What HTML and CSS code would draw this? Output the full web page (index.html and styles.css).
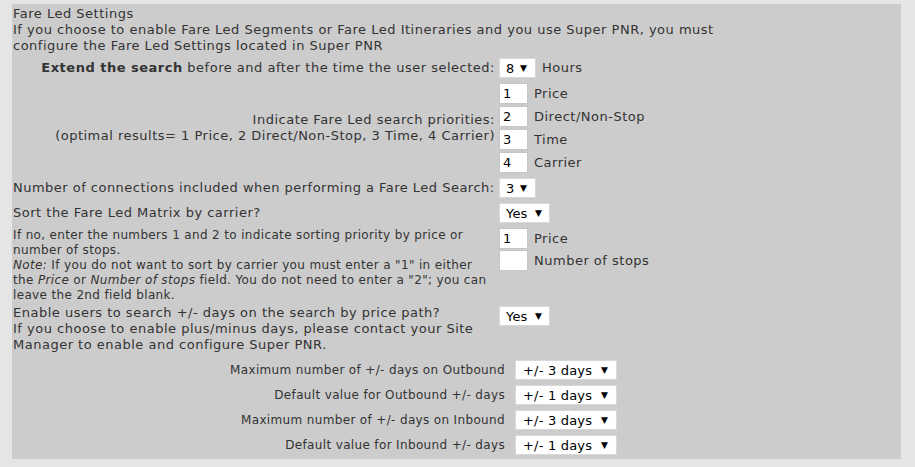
FILE: index.html
```html
<!DOCTYPE html>
<html>
<head>
<meta charset="utf-8">
<title>Fare Led Settings</title>
<link rel="stylesheet" href="styles.css">
</head>
<body>
<div class="panel">
  <div class="intro">Fare Led Settings<br>If you choose to enable Fare Led Segments or Fare Led Itineraries and you use Super PNR, you must<br>configure the Fare Led Settings located in Super PNR</div>

  <div class="grid">
    <div class="lbl right row-extend"><span><b>Extend the search</b> before and after the time the user selected:</span></div>
    <div class="ctl row-extend"><span class="sel w37"><select><option>8</option></select></span><span class="unit">Hours</span></div>

    <div class="lbl right row-prio"><span>Indicate Fare Led search priorities:<br>(optimal results= 1 Price, 2 Direct/Non-Stop, 3 Time, 4 Carrier)</span></div>
    <div class="stack row-prio">
      <div class="pair"><input class="num" value="1"><span>Price</span></div>
      <div class="pair"><input class="num" value="2"><span>Direct/Non-Stop</span></div>
      <div class="pair"><input class="num" value="3"><span>Time</span></div>
      <div class="pair"><input class="num" value="4"><span>Carrier</span></div>
    </div>

    <div class="lbl nowrap row-conn"><span>Number of connections included when performing a Fare Led Search:</span></div>
    <div class="ctl row-conn"><span class="sel w37"><select><option>3</option></select></span></div>

    <div class="lbl row-sort"><span>Sort the Fare Led Matrix by carrier?</span></div>
    <div class="ctl row-sort"><span class="sel w51"><select><option>Yes</option></select></span></div>

    <div class="note row-order">If no, enter the numbers 1 and 2 to indicate sorting priority by price or number of stops.<br><i>Note:</i> If you do not want to sort by carrier you must enter a "1" in either the <i>Price</i> or <i>Number of stops</i> field. You do not need to enter a "2"; you can leave the 2nd field blank.</div>
    <div class="stack tight row-order">
      <div class="pair"><input class="num" value="1"><span>Price</span></div>
      <div class="pair"><input class="num" value=""><span>Number of stops</span></div>
    </div>

    <div class="text row-days">Enable users to search +/- days on the search by price path?<br>If you choose to enable plus/minus days, please contact your Site Manager to enable and configure Super PNR.</div>
    <div class="ctl top row-days"><span class="sel w51"><select><option>Yes</option></select></span></div>
  </div>

  <div class="days">
    <div class="dlbl">Maximum number of +/- days on Outbound</div>
    <div><span class="sel w102"><select><option>+/- 3 days</option></select></span></div>
    <div class="dlbl">Default value for Outbound +/- days</div>
    <div><span class="sel w102"><select><option>+/- 1 days</option></select></span></div>
    <div class="dlbl">Maximum number of +/- days on Inbound</div>
    <div><span class="sel w102"><select><option>+/- 3 days</option></select></span></div>
    <div class="dlbl">Default value for Inbound +/- days</div>
    <div><span class="sel w102"><select><option>+/- 1 days</option></select></span></div>
  </div>
</div>
</body>
</html>
```
FILE: styles.css
```css
html, body {
  background: #e5e5e5;
}
body {
  margin: 4px 14px 8px 12px;
  font-family: "DejaVu Sans", Verdana, sans-serif;
  font-size: 13px;
  line-height: 16px;
  letter-spacing: 0.5px;
  color: #333;
}
.panel {
  background: #cccccc;
  padding: 2px 0 4px 1px;
}
.intro {
  line-height: 16px;
}
.grid {
  display: grid;
  grid-template-columns: 482px 1fr;
  column-gap: 4px;
  margin-top: 4px;
}
.lbl {
  display: flex;
  align-items: center;
}
.lbl.right {
  justify-content: flex-end;
  text-align: right;
}
.lbl.nowrap {
  white-space: nowrap;
  letter-spacing: 0.48px;
}
.note {
  font-size: 12px;
  line-height: 15px;
  letter-spacing: 0.35px;
}
.ctl {
  display: flex;
  align-items: center;
  letter-spacing: 0;
}
.ctl.top {
  align-items: flex-start;
  padding-top: 1px;
}
.row-extend { height: 20px; }
.row-prio { margin-top: 5px; }
.row-conn { margin-top: 5px; height: 20px; }
.row-sort { margin-top: 5px; height: 20px; }
.row-order { margin-top: 5px; }
.row-days { margin-top: 2px; }
.unit {
  margin-left: 6px;
  letter-spacing: 0.5px;
}
.stack {
  display: flex;
  flex-direction: column;
  gap: 2px;
}
.stack.tight {
  gap: 1px;
}
.pair {
  display: flex;
  align-items: center;
  gap: 6px;
}
.num {
  width: 29px;
  height: 21px;
  box-sizing: border-box;
  margin: 0;
  border: 1px solid #c6c6c6;
  background: #fff;
  padding: 0 0 0 3px;
  font-family: "DejaVu Sans", Verdana, sans-serif;
  font-size: 13px;
  color: #000;
  outline: none;
}
.sel {
  position: relative;
  display: inline-block;
  letter-spacing: 0;
}
.sel select {
  -webkit-appearance: none;
  appearance: none;
  display: block;
  height: 20px;
  box-sizing: border-box;
  margin: 0;
  border: 1px solid #d8d8d8;
  border-radius: 0;
  background: #fff;
  padding: 0 0 0 6px;
  font-family: "DejaVu Sans", Verdana, sans-serif;
  font-size: 13px;
  letter-spacing: 0.2px;
  color: #000;
}
.sel::after {
  content: "\25BC";
  position: absolute;
  right: 9px;
  top: 5px;
  font-size: 9px;
  line-height: 10px;
  color: #000;
  pointer-events: none;
}
.w37 select { width: 37px; }
.w51 select { width: 51px; }
.w102 select { width: 102px; padding-left: 7px; }
.w51::after { right: 8px; }
.days {
  display: grid;
  grid-template-columns: 492px auto;
  column-gap: 10px;
  row-gap: 5px;
  margin-top: 7px;
  justify-content: start;
  font-size: 12px;
  letter-spacing: 0.35px;
}
.dlbl {
  text-align: right;
  display: flex;
  align-items: center;
  justify-content: flex-end;
}
```
